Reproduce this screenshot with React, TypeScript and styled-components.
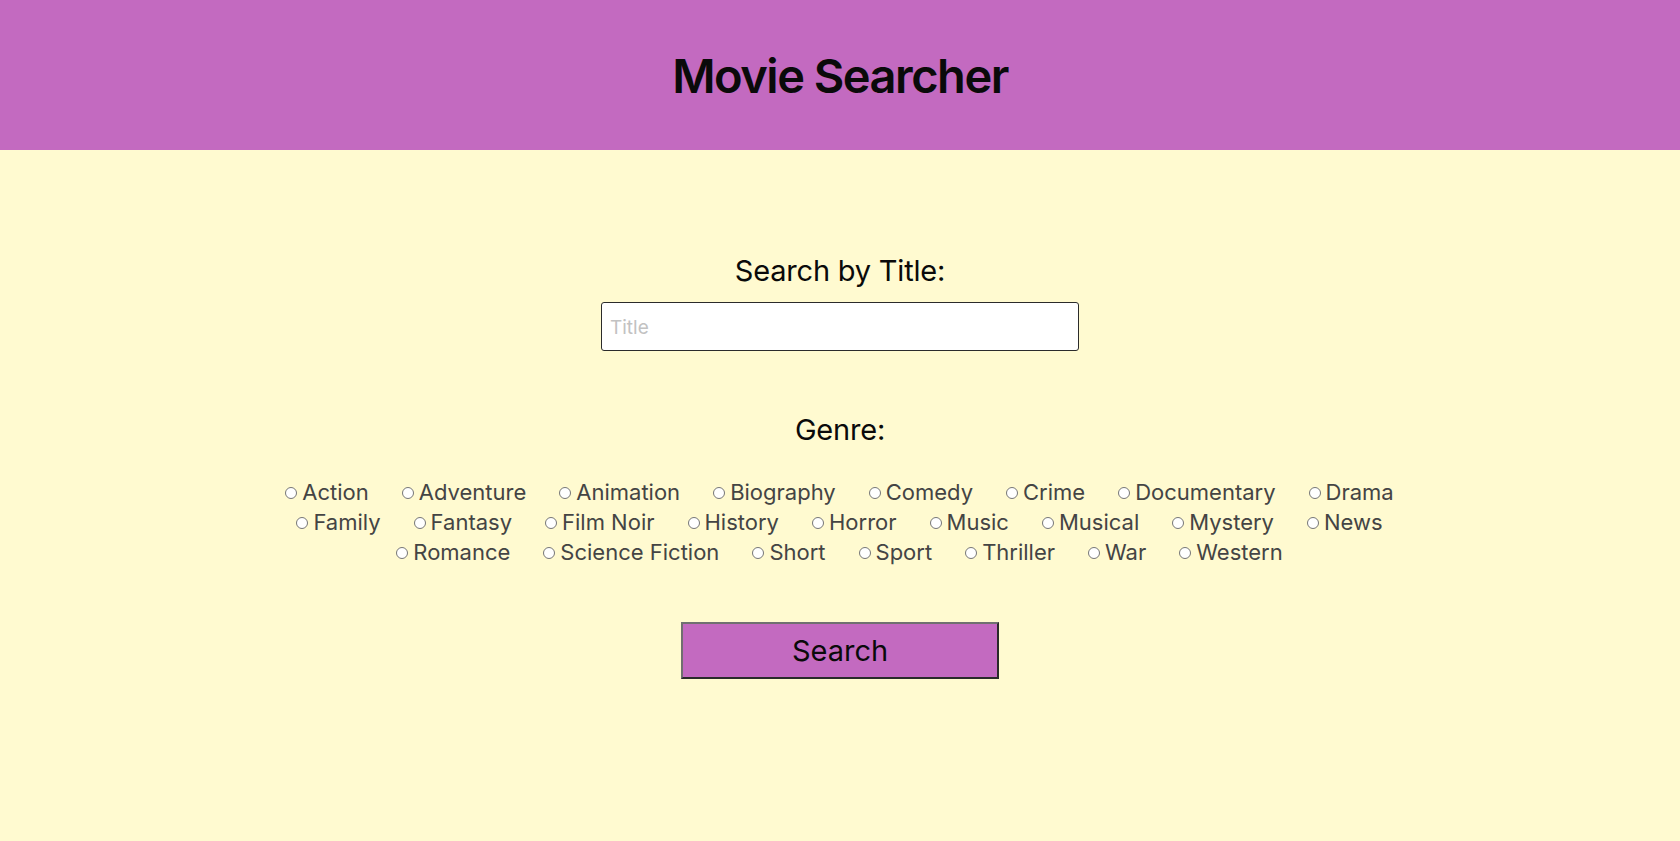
import React from "react";
import styled, { createGlobalStyle } from "styled-components";

const GlobalStyle = createGlobalStyle`
  html, body { margin: 0; padding: 0; }
  body {
    background: #fffad0;
    font-family: Inter, "Noto Sans", "Liberation Sans", sans-serif;
  }
`;

const Page = styled.div`
  min-height: 841px;
  background: #fffad0;
  display: flex;
  flex-direction: column;
`;

const Header = styled.header`
  height: 150px;
  background: #c36ac0;
  display: flex;
  align-items: center;
  justify-content: center;
`;

const Title = styled.h1`
  margin: 0;
  font-size: 47px;
  font-weight: 600;
  color: #0a0a0a;
  letter-spacing: -1.5px;
`;

const Main = styled.main`
  display: flex;
  flex-direction: column;
  align-items: center;
  padding-top: 103px;
`;

const SectionLabel = styled.label<{ $gap: number }>`
  font-size: 29px;
  line-height: 36px;
  color: #0a0a0a;
  letter-spacing: -0.2px;
  margin-bottom: ${(p) => p.$gap}px;
`;

const TitleInput = styled.input`
  box-sizing: border-box;
  width: 478px;
  height: 49px;
  border: 1px solid #2b2b2b;
  border-radius: 3px;
  background: #fff;
  padding: 2px 8px 0;
  font-size: 19px;
  font-family: inherit;
  margin-bottom: 61px;
  &::placeholder { color: #c2c2c2; }
`;

const GenreGroup = styled.div`
  display: flex;
  flex-wrap: wrap;
  justify-content: center;
  column-gap: 28px;
  max-width: 1180px;
  padding-right: 6px;
  margin-bottom: 55px;
`;

const GenreItem = styled.label`
  display: flex;
  align-items: center;
  height: 30px;
  font-size: 22px;
  color: #444;
`;

const Radio = styled.input`
  appearance: none;
  box-sizing: border-box;
  width: 12px;
  height: 12px;
  border: 1px solid #767676;
  border-radius: 50%;
  background: #fff;
  margin: 1px 5px 0 5px;
`;

const SearchButton = styled.button`
  box-sizing: border-box;
  width: 318px;
  height: 57px;
  background: #c36ac0;
  border-style: solid;
  border-width: 2px;
  border-color: #707070 #2a2a2a #2a2a2a #707070;
  font-family: inherit;
  font-size: 29px;
  color: #0a0a0a;
`;

const genres = [
  "Action", "Adventure", "Animation", "Biography", "Comedy", "Crime", "Documentary", "Drama",
  "Family", "Fantasy", "Film Noir", "History", "Horror", "Music", "Musical", "Mystery", "News",
  "Romance", "Science Fiction", "Short", "Sport", "Thriller", "War", "Western",
];

export default function App() {
  return (
    <Page>
      <GlobalStyle />
      <Header>
        <Title>Movie Searcher</Title>
      </Header>
      <Main>
        <SectionLabel $gap={13} htmlFor="title">Search by Title:</SectionLabel>
        <TitleInput id="title" placeholder="Title" />
        <SectionLabel $gap={29}>Genre:</SectionLabel>
        <GenreGroup>
          {genres.map((g) => (
            <GenreItem key={g}>
              <Radio type="radio" name="genre" value={g} />
              {g}
            </GenreItem>
          ))}
        </GenreGroup>
        <SearchButton>Search</SearchButton>
      </Main>
    </Page>
  );
}
